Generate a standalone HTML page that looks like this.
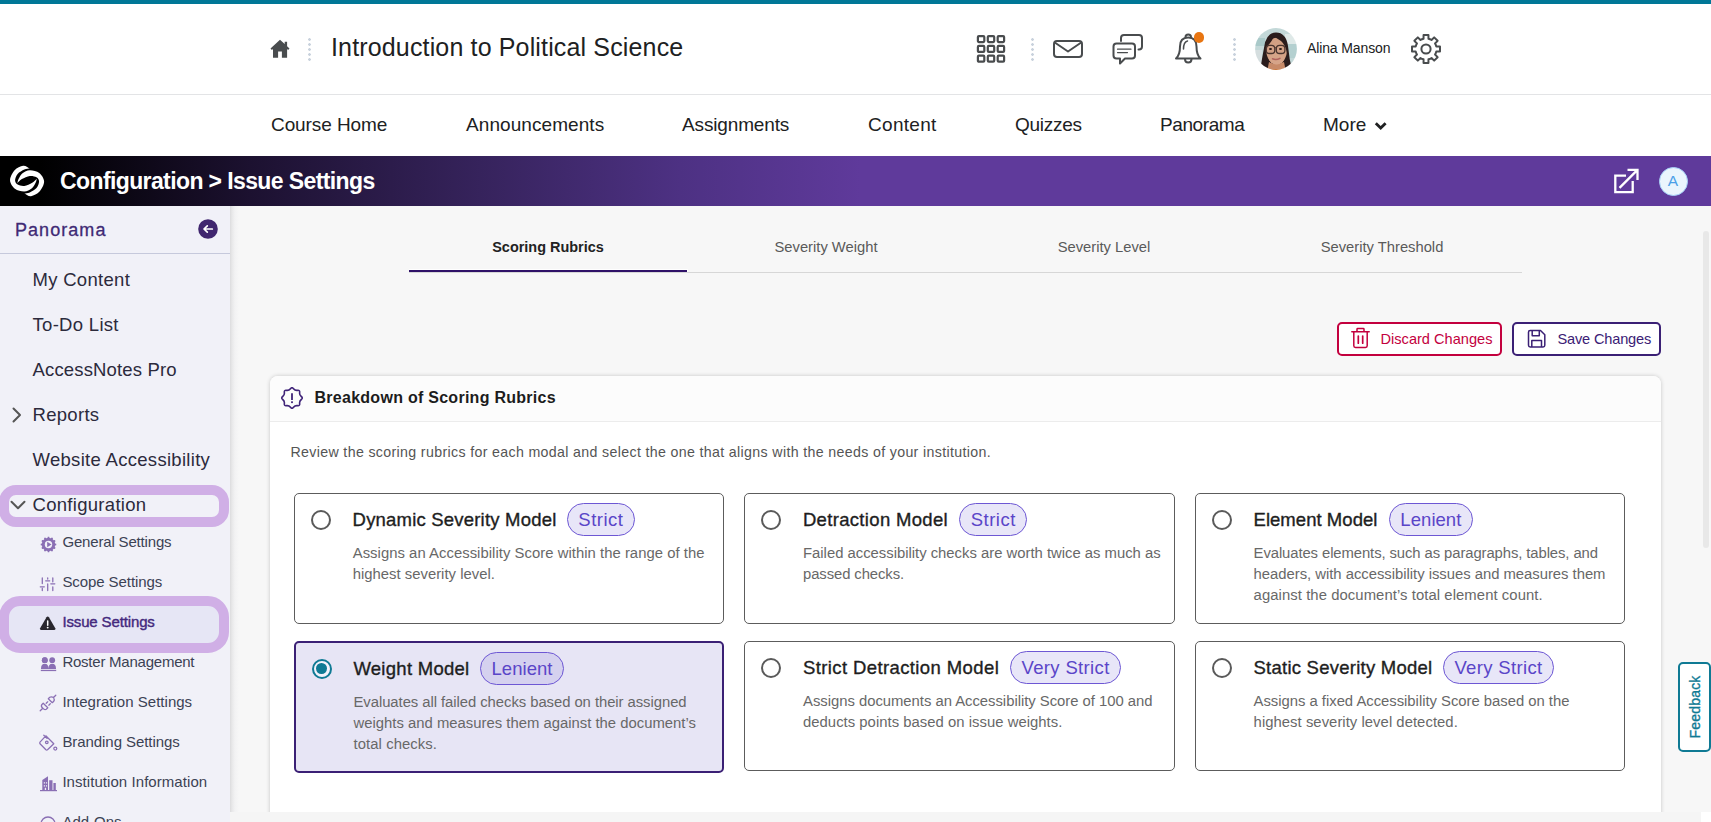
<!DOCTYPE html>
<html lang="en">
<head>
<meta charset="utf-8">
<title>Configuration - Issue Settings</title>
<style>
*{box-sizing:border-box;margin:0;padding:0}
html,body{width:1711px;height:822px;overflow:hidden;background:#fff;font-family:"Liberation Sans",sans-serif;color:#202122}
.abs{position:absolute}
.t{position:absolute;white-space:nowrap;line-height:1}
#topstripe{left:0;top:0;width:1711px;height:4px;background:#007797}
#hdr{left:0;top:4px;width:1711px;height:90px;background:#fff}
#hdrline{left:0;top:94px;width:1711px;height:1px;background:#e3e4e6}
#nav{left:0;top:95px;width:1711px;height:61px;background:#fff}
.navi{font-size:19px;color:#202122;top:115px}
.dots{width:3px;height:23px;background:radial-gradient(circle at 1.5px 1.5px,#c9d2dd 1.050px,rgba(201,210,221,0) 1.600px) 0 0/3px 5px repeat-y}
#pbar{left:0;top:156px;width:1711px;height:50px;background:linear-gradient(90deg,#000 0,#000 40px,#1c1130 250px,#36235c 480px,#4d3183 680px,#5f3a9b 860px,#5f3a9b 100%)}
#ptitle{left:60px;top:170.200px;font-size:23px;font-weight:bold;color:#fff;letter-spacing:-0.61px}
#side{left:0;top:206px;width:230px;height:616px;background:#f1f1f8;overflow:hidden}
#sideshadow{left:230px;top:206px;width:9px;height:606px;background:linear-gradient(90deg,#dcdcde,#e9e9ea 25%,#f2f2f3 55%,#f7f7f7)}
#main{left:230px;top:206px;width:1481px;height:616px;background:#f7f7f7;overflow:hidden}

.sh{left:15px;top:220.700px;font-size:18px;letter-spacing:1.050px;color:#3f2a75;-webkit-text-stroke:0.300px #3f2a75}
.si{left:32.500px;font-size:18.500px;color:#2c2a3c;letter-spacing:0.300px;margin-top:-0.500px}
.ss{left:62.400px;font-size:15px;color:#3c4254;margin-top:-0.800px}
.ring{border:10px solid #d0afe6;background:transparent}

.tab{top:240px;width:278px;text-align:center;font-size:14.750px;color:#5a5a5a}
.btn{top:322px;height:34px;border-radius:5px;background:#fff}
.opt{border:1px solid #5c5c5c;border-radius:5px;background:#fff;width:430px}
.radio{width:20px;height:20px;border-radius:50%;border:2px solid #5a5a5a;background:#fff}
.ot{font-size:18.500px;color:#1e1e1e;-webkit-text-stroke:0.350px #1e1e1e}
.badge{height:33px;border-radius:17px;border:1px solid #6d57d4;background:#e8e6f8;color:#5a45c8;font-size:18.500px;line-height:31px;text-align:center;white-space:nowrap}
.od{font-size:14.850px;line-height:21px;color:#686868;white-space:nowrap}
</style>
</head>
<body>
<div class="abs" id="topstripe"></div>
<div class="abs" id="hdr"></div>
<div class="abs" id="hdrline"></div>
<div class="abs" id="nav"></div>

<!-- header content -->
<svg class="abs" style="left:270px;top:39px" width="20" height="20" viewBox="270 39 20 20"><path d="M280 39.700 L270.500 48.500 L271.900 50 L273 49 V57.800 H278.100 V51.500 H281.900 V57.800 H287.100 V49 L288.100 50 L289.500 48.500 L287.100 46.300 V41.700 H284.700 V44.100 Z" fill="#494c4e"/></svg>
<div class="abs dots" style="left:308px;top:37.500px"></div>
<div class="t" id="ctitle" style="left:331px;top:34.800px;font-size:25px;letter-spacing:0.15px;color:#202122">Introduction to Political Science</div>


<!-- header right icons -->
<svg class="abs" style="left:976px;top:34px" width="30" height="30" viewBox="0 0 30 30" fill="none" stroke="#494c4e" stroke-width="2.200">
<rect x="1.9" y="2.1" width="6.4" height="6" rx="1"/><rect x="11.8" y="2.1" width="6.4" height="6" rx="1"/><rect x="21.7" y="2.1" width="6.4" height="6" rx="1"/>
<rect x="1.9" y="11.9" width="6.4" height="6" rx="1"/><rect x="11.8" y="11.9" width="6.4" height="6" rx="1"/><rect x="21.7" y="11.9" width="6.4" height="6" rx="1"/>
<rect x="1.9" y="21.7" width="6.4" height="6" rx="1"/><rect x="11.8" y="21.7" width="6.4" height="6" rx="1"/><rect x="21.7" y="21.7" width="6.4" height="6" rx="1"/>
</svg>
<div class="abs dots" style="left:1030.500px;top:37.500px"></div>
<svg class="abs" style="left:1052px;top:39px" width="32" height="20" viewBox="0 0 32 20" fill="none" stroke="#494c4e" stroke-width="2" stroke-linejoin="round" stroke-linecap="round">
<rect x="2" y="2" width="28" height="16" rx="3"/><path d="M3.5 4 L16 12.5 L28.5 4"/>
</svg>
<svg class="abs" style="left:1112px;top:33px" width="32" height="32" viewBox="0 0 32 32" fill="none" stroke="#494c4e" stroke-width="2" stroke-linejoin="round" stroke-linecap="round">
<path d="M9 8 V5 Q9 2 12 2 H27 Q30 2 30 5 V13.500 Q30 16.500 27 16.500 H26.500"/>
<path d="M4.500 10.500 H20 Q23 10.500 23 13.500 V22.500 Q23 25.500 20 25.500 H13 L8 30.500 V25.500 H4.500 Q1.500 25.500 1.500 22.500 V13.500 Q1.500 10.500 4.500 10.500 Z"/>
<path d="M5.500 16.200 H19 M5.500 19.600 H15.500" stroke-width="1.200"/>
</svg>
<svg class="abs" style="left:1172px;top:31px" width="34" height="34" viewBox="0 0 34 34" fill="none" stroke="#494c4e" stroke-width="2" stroke-linejoin="round" stroke-linecap="round">
<path d="M13.5 6.2 Q13.5 3.5 16.2 3.5 Q19 3.500 19 6.200"/>
<path d="M4 27.5 Q8 24 8 15.5 Q8 6.5 16.2 6.500 Q24.500 6.500 24.500 15.500 Q24.500 24 28.500 27.500 Z"/>
<path d="M13 28 Q13 31.5 16.2 31.5 Q19.500 31.500 19.500 28"/>
<path d="M11.5 18 Q11.5 11 15.5 10" stroke-width="1.5"/>
</svg>
<div class="abs" style="left:1193.500px;top:32px;width:10.500px;height:10.500px;border-radius:50%;background:#e87511"></div>
<div class="abs dots" style="left:1232.500px;top:37.500px"></div>
<!-- avatar -->
<svg class="abs" style="left:1255px;top:28px" width="42" height="42" viewBox="0 0 42 42">
<defs><clipPath id="avc"><circle cx="21" cy="21" r="20.9"/></clipPath>
<filter id="avb" x="-10%" y="-10%" width="120%" height="120%"><feGaussianBlur stdDeviation="0.55"/></filter></defs>
<g clip-path="url(#avc)"><g filter="url(#avb)">
<rect x="-2" y="-2" width="46" height="46" fill="#c3d8d8"/>
<rect x="-2" y="10" width="12" height="8" fill="#a9c9c9"/>
<rect x="30" y="6" width="14" height="10" fill="#dfe9e8"/>
<rect x="32" y="16" width="12" height="14" fill="#b4d0d0"/>
<rect x="-2" y="22" width="9" height="20" fill="#d5dedf"/>
<path d="M5 44 Q7 30 9 20 Q10.500 5 21 4.500 Q31 4.500 33 18 Q34 30 37.500 44 Z" fill="#2b1c1b"/>
<path d="M14 34 Q21 38 29 34 L31 44 H12 Z" fill="#c78a68"/>
<path d="M16 41 H27 L28 44 H15 Z" fill="#c8763e"/>
<ellipse cx="21.600" cy="23" rx="10.200" ry="13.200" fill="#d2a083"/>
<ellipse cx="21.600" cy="30" rx="8" ry="6.500" fill="#d6a488"/>
<path d="M10.500 22 Q10 9 19 8.500 Q17 13 13.500 17 Q12 19 11.500 24 Z" fill="#2b1c1b"/>
<path d="M19 8.500 Q29 7 32 18 Q32.500 22 32 25 Q30.500 17 26 13 Q22 10.500 19 8.500 Z" fill="#2b1c1b"/>
<rect x="11.200" y="17.300" width="8.600" height="8.200" rx="3.300" fill="#cfa088" fill-opacity="0.500" stroke="#4a342e" stroke-width="1.300"/>
<rect x="21.300" y="17.300" width="8.600" height="8.200" rx="3.300" fill="#cfa088" fill-opacity="0.500" stroke="#4a342e" stroke-width="1.300"/>
<path d="M19.800 20 Q20.550 19.300 21.300 20" stroke="#4a342e" stroke-width="1" fill="none"/>
<ellipse cx="15.500" cy="21" rx="1.500" ry="0.900" fill="#2a1b18"/>
<ellipse cx="25.500" cy="21" rx="1.500" ry="0.900" fill="#2a1b18"/>
<path d="M17.500 30.700 Q21 32.300 25 30.300" stroke="#b0625c" stroke-width="1.500" fill="none" stroke-linecap="round"/>
</g></g>
</svg>
<div class="t" id="uname" style="left:1307px;top:41px;font-size:14px;letter-spacing:-0.120px;color:#202122">Alina Manson</div>
<svg class="abs" style="left:1410px;top:33px" width="32" height="32" viewBox="0 0 32 32" fill="none" stroke="#494c4e" stroke-width="2" stroke-linejoin="round">
<path d="M13.53 5.69 L13.56 2.01 L18.44 2.01 L18.47 5.69 A10.60 10.60 0 0 1 21.54 6.96 L24.17 4.38 L27.62 7.83 L25.04 10.46 A10.60 10.60 0 0 1 26.31 13.53 L29.99 13.56 L29.99 18.44 L26.31 18.47 A10.60 10.60 0 0 1 25.04 21.54 L27.62 24.17 L24.17 27.62 L21.54 25.04 A10.60 10.60 0 0 1 18.47 26.31 L18.44 29.99 L13.56 29.99 L13.53 26.31 A10.60 10.60 0 0 1 10.46 25.04 L7.83 27.62 L4.38 24.17 L6.96 21.54 A10.60 10.60 0 0 1 5.69 18.47 L2.01 18.44 L2.01 13.56 L5.69 13.53 A10.60 10.60 0 0 1 6.96 10.46 L4.38 7.83 L7.83 4.38 L10.46 6.96 A10.60 10.60 0 0 1 13.53 5.69 Z"/>
<circle cx="16" cy="16" r="4.600"/>
</svg>

<!-- nav -->
<div class="t navi" style="left:271px;letter-spacing:-0.09px">Course Home</div>
<div class="t navi" style="left:466px;letter-spacing:0.07px">Announcements</div>
<div class="t navi" style="left:682px;letter-spacing:-0.14px">Assignments</div>
<div class="t navi" style="left:868px;letter-spacing:0.30px">Content</div>
<div class="t navi" style="left:1015px;letter-spacing:-0.27px">Quizzes</div>
<div class="t navi" style="left:1160px;letter-spacing:-0.40px">Panorama</div>
<div class="t navi" style="left:1323px">More</div>
<svg class="abs" style="left:1374px;top:120.500px" width="14" height="10" viewBox="0 0 14 10"><path d="M1.800 2.200 L6.700 7.100 L11.600 2.200" fill="none" stroke="#202122" stroke-width="2.800"/></svg>

<!-- purple bar -->
<div class="abs" id="pbar"></div>
<div class="t" id="ptitle">Configuration &gt; Issue Settings</div>

<!-- purple bar content -->
<svg class="abs" style="left:0;top:156px" width="54" height="50" viewBox="-27.07 -24.94 54 50"><path id="lg1" fill="#fff" d="M2.74 -12.47 C1.62 -12.93 -1.42 -15.51 -3.95 -15.21 C-6.49 -14.90 -10.29 -13.08 -12.47 -10.64 C-14.65 -8.21 -17.08 -3.70 -17.03 -0.61 C-16.98 2.48 -14.55 6.03 -12.17 7.91 C-9.78 9.78 -5.53 10.70 -2.74 10.64 C0.05 10.59 2.69 9.07 4.56 7.60 C6.44 6.13 7.65 3.48 8.52 1.82 C9.38 0.17 9.53 -1.62 9.73 -2.31 C8.97 -1.62 7.25 0.61 5.17 1.82 C3.09 3.04 -0.30 4.68 -2.74 4.99 C-5.17 5.29 -7.89 4.58 -9.43 3.65 C-10.97 2.72 -11.98 1.17 -11.98 -0.61 C-11.98 -2.38 -10.97 -5.19 -9.43 -7.00 C-7.89 -8.80 -4.76 -10.52 -2.74 -11.44 C-0.71 -12.35 1.82 -12.30 2.74 -12.47 Z"/><path fill="#fff" transform="rotate(180)" d="M2.74 -12.47 C1.62 -12.93 -1.42 -15.51 -3.95 -15.21 C-6.49 -14.90 -10.29 -13.08 -12.47 -10.64 C-14.65 -8.21 -17.08 -3.70 -17.03 -0.61 C-16.98 2.48 -14.55 6.03 -12.17 7.91 C-9.78 9.78 -5.53 10.70 -2.74 10.64 C0.05 10.59 2.69 9.07 4.56 7.60 C6.44 6.13 7.65 3.48 8.52 1.82 C9.38 0.17 9.53 -1.62 9.73 -2.31 C8.97 -1.62 7.25 0.61 5.17 1.82 C3.09 3.04 -0.30 4.68 -2.74 4.99 C-5.17 5.29 -7.89 4.58 -9.43 3.65 C-10.97 2.72 -11.98 1.17 -11.98 -0.61 C-11.98 -2.38 -10.97 -5.19 -9.43 -7.00 C-7.89 -8.80 -4.76 -10.52 -2.74 -11.44 C-0.71 -12.35 1.82 -12.30 2.74 -12.47 Z"/></svg>
<svg class="abs" style="left:1612px;top:167px" width="28" height="28" viewBox="0 0 28 28" fill="none" stroke="#fff" stroke-width="2.300">
<path d="M14 8.700 H3.300 V25.100 H20.700 V14"/><path d="M7.500 20.900 L25 3.400 M15.500 2.900 H25.500 V12.900" />
</svg>
<div class="abs" style="left:1658.500px;top:166.500px;width:29px;height:29px;border-radius:50%;background:#eaf5fd;border:1.500px solid #a5d2f8"></div>
<div class="t" style="left:1658.500px;top:172.500px;width:29px;text-align:center;font-size:15.500px;color:#4a9fe8">A</div>

<div class="abs" id="side"></div>
<!-- sidebar content -->
<div class="t sh" id="sh">Panorama</div>
<svg class="abs" style="left:197.500px;top:218.500px" width="20" height="20" viewBox="0 0 20 20"><circle cx="10" cy="10" r="9.800" fill="#40266f"/><path d="M14.300 10 H6.300 M9.300 6.800 L6 10 L9.300 13.200" fill="none" stroke="#fff" stroke-width="1.700" stroke-linecap="round" stroke-linejoin="round"/></svg>
<div class="abs" style="left:0;top:253px;width:230px;height:1px;background:#c6c9dc"></div>
<div class="t si" style="top:271px">My Content</div>
<div class="t si" style="top:316px">To-Do List</div>
<div class="t si" style="top:361px;letter-spacing:0.150px">AccessNotes Pro</div>
<svg class="abs" style="left:11px;top:406px" width="12" height="18" viewBox="0 0 12 18"><path d="M2.500 2.500 L9 9 L2.500 15.500" fill="none" stroke="#555" stroke-width="2" stroke-linecap="round" stroke-linejoin="round"/></svg>
<div class="t si" style="top:406px">Reports</div>
<div class="t si" style="top:451px">Website Accessibility</div>
<div class="abs ring" style="left:-1px;top:485px;width:230px;height:42px;border-radius:17px"></div>
<svg class="abs" style="left:9px;top:499px" width="18" height="12" viewBox="0 0 18 12"><path d="M2.500 2.800 L9 9.300 L15.500 2.800" fill="none" stroke="#555" stroke-width="2" stroke-linecap="round" stroke-linejoin="round"/></svg>
<div class="t si" style="top:496px">Configuration</div>
<div class="abs" style="left:8px;top:605px;width:212px;height:39px;border-radius:12px;background:#e6e6f5"></div>
<div class="abs ring" style="left:-1px;top:596px;width:230px;height:57px;border-radius:21px"></div>
<div class="t ss" style="top:535px;letter-spacing:-0.169px">General Settings</div>
<div class="t ss" style="top:575px;letter-spacing:-0.079px">Scope Settings</div>
<div class="t ss" id="iss" style="top:615px;color:#44297d;-webkit-text-stroke:0.400px #44297d;letter-spacing:-0.136px">Issue Settings</div>
<div class="t ss" style="top:655px;letter-spacing:-0.235px">Roster Management</div>
<div class="t ss" style="top:695px;letter-spacing:0.025px">Integration Settings</div>
<div class="t ss" style="top:735px;letter-spacing:-0.065px">Branding Settings</div>
<div class="t ss" style="top:775px;letter-spacing:0.061px">Institution Information</div>
<div class="t ss" style="top:815px">Add-Ons</div>
<!-- side icons -->
<svg class="abs" style="left:40px;top:536px" width="17" height="17" viewBox="0 0 17 17"><path d="M7.45 1.88 L7.81 0.73 L9.19 0.73 L9.55 1.88 L10.90 2.25 L11.78 1.43 L12.99 2.12 L12.72 3.29 L13.71 4.28 L14.88 4.01 L15.57 5.22 L14.75 6.10 L15.12 7.45 L16.27 7.81 L16.27 9.19 L15.12 9.55 L14.75 10.90 L15.57 11.78 L14.88 12.99 L13.71 12.72 L12.72 13.71 L12.99 14.88 L11.78 15.57 L10.90 14.75 L9.55 15.12 L9.19 16.27 L7.81 16.27 L7.45 15.12 L6.10 14.75 L5.22 15.57 L4.01 14.88 L4.28 13.71 L3.29 12.72 L2.12 12.99 L1.43 11.78 L2.25 10.90 L1.88 9.55 L0.73 9.19 L0.73 7.81 L1.88 7.45 L2.25 6.10 L1.43 5.22 L2.12 4.01 L3.29 4.28 L4.28 3.29 L4.01 2.12 L5.22 1.43 L6.10 2.25 Z" fill="#8a6fb4"/><circle cx="8.500" cy="8.500" r="3.700" fill="#f1f1f8"/><path d="M7.200 5.700 L11.500 8.500 L7.200 11.300 Z" fill="#8a6fb4"/></svg>
<svg class="abs" style="left:39px;top:576px" width="18" height="16" viewBox="0 0 18 16" stroke="#8a6fb4" stroke-width="1.300" fill="none" stroke-linecap="round"><path d="M3.300 2 V7.500 M3.300 12.500 V14.500 M1.300 10.800 H5.300 M8.700 2 V3 M8.700 8 V14.500 M6.700 4.800 H10.700 M13.800 2 V5.800 M13.800 10.800 V14.500 M11.800 7.800 H15.800"/></svg>
<svg class="abs" style="left:39px;top:615px" width="18" height="16" viewBox="0 0 18 16"><path d="M8.700 1.500 Q9.400 1.500 9.900 2.300 L16.300 13.300 Q16.900 14.800 15.300 15 H2.100 Q0.500 14.800 1.100 13.300 L7.500 2.300 Q8 1.500 8.700 1.500 Z" fill="#29272e"/><path d="M8.700 6 V10.300" stroke="#fff" stroke-width="1.500" stroke-linecap="round"/><circle cx="8.700" cy="12.600" r="0.950" fill="#fff"/></svg>
<svg class="abs" style="left:40px;top:656px" width="17" height="16" viewBox="0 0 17 16" fill="#8a6fb4"><circle cx="4.800" cy="4.200" r="2.900"/><circle cx="12.200" cy="4.200" r="2.900"/><path d="M1 12.500 Q1 7.800 4.800 7.800 Q8.500 7.800 8.500 12.500 Q8.500 7.800 12.200 7.800 Q16 7.800 16 12.500 V13 H1 Z"/><rect x="0.800" y="13.800" width="15.400" height="1.300"/><circle cx="4.800" cy="4.200" r="2.900"/></svg>
<svg class="abs" style="left:39px;top:694px" width="18" height="18" viewBox="0 0 18 18" stroke="#8a6fb4" stroke-width="1.250" fill="none" stroke-linecap="round" stroke-linejoin="round"><path d="M1.200 16.800 L3.800 14.200 M16.800 1.200 L14.500 3.500 M4.200 9.200 L8.800 13.800 L7.300 15.300 Q5.500 16.300 3.800 14.200 Q1.700 12.500 2.700 10.700 Z M9.300 4.700 L13.300 8.700 L14.800 7.200 Q15.800 5.500 14.500 3.500 Q12.500 2.200 10.800 3.200 Z M7.200 9.300 L8.700 7.800 M9.800 11.200 L11.300 9.700"/></svg>
<svg class="abs" style="left:38px;top:734px" width="20" height="18" viewBox="0 0 20 18" stroke="#8a6fb4" stroke-width="1.250" fill="none" stroke-linecap="round" stroke-linejoin="round"><path d="M7.800 1.800 L15.800 9.800 L9.500 15.800 Q8.700 16.400 7.900 15.800 L2 9.800 Q1.400 9 2 8.200 Z M5.800 1.200 L9 4.400"/><circle cx="8.800" cy="8.300" r="1.300"/><circle cx="17.300" cy="14.500" r="1.500"/></svg>
<svg class="abs" style="left:39px;top:775px" width="19" height="17" viewBox="0 0 19 17" fill="#8a6fb4"><path d="M3.300 5 L9 1.300 V15 H3.300 Z M10.200 5.200 H13.500 V15 H10.200 Z M14.400 8 H16.800 V15 H14.400 Z"/><rect x="1" y="15" width="17" height="1.200"/><path d="M4.800 7.200 H6 V8.600 H4.800 Z M6.900 7.200 H8.100 V8.600 H6.900 Z M4.800 10.200 H6 V11.600 H4.800 Z M6.900 10.200 H8.100 V11.600 H6.900 Z M5.800 12.800 H7.100 V15 H5.800 Z" fill="#f1f1f8"/></svg>
<svg class="abs" style="left:40px;top:816px" width="16" height="16" viewBox="0 0 16 16" stroke="#8a6fb4" stroke-width="1.300" fill="none"><circle cx="8" cy="8" r="7"/></svg>

<div class="abs" id="main"></div>
<!-- main content -->
<div class="t tab" id="tab1" style="left:409px;font-weight:bold;color:#222;font-size:14.450px">Scoring Rubrics</div>
<div class="t tab" style="left:687px">Severity Weight</div>
<div class="t tab" style="left:965px">Severity Level</div>
<div class="t tab" style="left:1243px">Severity Threshold</div>
<div class="abs" style="left:409px;top:272px;width:1113px;height:1px;background:#d7d7d7"></div>
<div class="abs" style="left:409px;top:269px;width:279px;height:3px;background:#fff"></div><div class="abs" style="left:409px;top:270px;width:278px;height:2px;background:#2f1268"></div>

<div class="abs btn" style="left:1337px;width:165px;border:2px solid #c3003e"></div>
<svg class="abs" style="left:1350px;top:327px" width="21" height="22" viewBox="0 0 21 22" fill="none" stroke="#c3003e" stroke-width="1.500" stroke-linejoin="round" stroke-linecap="round"><path d="M1.800 4.800 H19.200 M7 4.500 V2.300 Q7 1.600 7.700 1.600 H13.300 Q14 1.600 14 2.300 V4.500 M3.800 5 V18.700 Q3.800 20.400 5.500 20.400 H15.500 Q17.200 20.400 17.200 18.700 V5"/><path d="M8.300 9 V16.200 M12.700 9 V16.200" stroke-width="1.700"/></svg>
<div class="t" id="b1t" style="left:1380.500px;top:331.500px;font-size:14.600px;color:#c3003e">Discard Changes</div>
<div class="abs btn" style="left:1512px;width:149px;border:2px solid #3b2075"></div>
<svg class="abs" style="left:1526px;top:328px" width="21" height="21" viewBox="0 0 21 21" fill="none" stroke="#3b2075" stroke-width="1.500" stroke-linejoin="round"><path d="M2.500 4.200 Q2.500 2.500 4.200 2.500 H14.500 L18.800 6.800 V17.300 Q18.800 19 17.100 19 H4.200 Q2.500 19 2.500 17.300 Z"/><path d="M6.200 2.800 V7.800 H13.300 V2.800 M5.800 19 V12.500 H15.500 V19"/></svg>
<div class="t" id="b2t" style="left:1557.500px;top:331.500px;font-size:14.600px;letter-spacing:-0.180px;color:#3b2075">Save Changes</div>

<!-- card -->
<div class="abs" style="left:270px;top:376px;width:1391px;height:460px;border-radius:8px;background:#fff;box-shadow:0 0 4px rgba(0,0,0,0.200)"></div>
<div class="abs" style="left:270px;top:376px;width:1391px;height:45.500px;border-radius:8px 8px 0 0;background:#fcfcfc;border-bottom:1px solid #ececec"></div>
<svg class="abs" style="left:281px;top:387px" width="22" height="22" viewBox="0 0 22 22" fill="none" stroke="#3f2378" stroke-width="1.600" stroke-linejoin="round"><path d="M9.49 1.70 Q11.00 -0.30 12.51 1.70 Q14.02 3.70 16.51 3.36 Q18.99 3.01 18.64 5.49 Q18.30 7.98 20.30 9.49 Q22.30 11.00 20.30 12.51 Q18.30 14.02 18.64 16.51 Q18.99 18.99 16.51 18.64 Q14.02 18.30 12.51 20.30 Q11.00 22.30 9.49 20.30 Q7.98 18.30 5.49 18.64 Q3.01 18.99 3.36 16.51 Q3.70 14.02 1.70 12.51 Q-0.30 11.00 1.70 9.49 Q3.70 7.98 3.36 5.49 Q3.01 3.01 5.49 3.36 Q7.98 3.70 9.49 1.70 Z"/><path d="M11 6.300 V13" stroke-width="1.800"/><rect x="10.100" y="14.300" width="1.800" height="1.800" fill="#3f2378" stroke="none"/></svg>
<div class="t" id="cardt" style="left:314.500px;top:389.500px;font-size:16px;letter-spacing:0.270px;font-weight:bold;color:#1c1c1c">Breakdown of Scoring Rubrics</div>
<div class="t" id="para" style="left:290.500px;top:444.500px;font-size:14.200px;letter-spacing:0.345px;color:#555">Review the scoring rubrics for each modal and select the one that aligns with the needs of your institution.</div>
<!-- options -->
<div class="abs opt" style="left:294px;top:493px;height:131px"></div>
<div class="abs radio" style="left:310.7px;top:510.0px"></div>
<div class="t ot" id="ot0" style="left:352.6px;top:510.5px;letter-spacing:0.200px">Dynamic Severity Model</div>
<div class="abs badge" id="bd0" style="left:566.7px;top:503.2px;width:68px;letter-spacing:0.5px;text-indent:0.5px">Strict</div>
<div class="abs od od0" style="left:352.7px;top:543.0px;letter-spacing:0.038px">Assigns an Accessibility Score within the range of the</div>
<div class="abs od od0" style="left:352.7px;top:564.0px;letter-spacing:0.011px">highest severity level.</div>
<div class="abs opt" style="left:744px;top:493px;height:131px;width:431px"></div>
<div class="abs radio" style="left:761.0px;top:510.0px"></div>
<div class="t ot" id="ot1" style="left:802.9px;top:510.5px;letter-spacing:0.332px">Detraction Model</div>
<div class="abs badge" id="bd1" style="left:959px;top:503.2px;width:68px;letter-spacing:0.5px;text-indent:0.5px">Strict</div>
<div class="abs od od1" style="left:803.0px;top:543.0px;letter-spacing:-0.008px">Failed accessibility checks are worth twice as much as</div>
<div class="abs od od1" style="left:803.0px;top:564.0px;letter-spacing:-0.094px">passed checks.</div>
<div class="abs opt" style="left:1195px;top:493px;height:131px"></div>
<div class="abs radio" style="left:1211.6000000000001px;top:510.0px"></div>
<div class="t ot" id="ot2" style="left:1253.5px;top:510.5px;letter-spacing:0.043px">Element Model</div>
<div class="abs badge" id="bd2" style="left:1388.9px;top:503.2px;width:84px;letter-spacing:0.05px">Lenient</div>
<div class="abs od od2" style="left:1253.6000000000001px;top:543.0px;letter-spacing:-0.093px">Evaluates elements, such as paragraphs, tables, and</div>
<div class="abs od od2" style="left:1253.6000000000001px;top:564.0px;letter-spacing:-0.024px">headers, with accessibility issues and measures them</div>
<div class="abs od od2" style="left:1253.6000000000001px;top:585.0px;letter-spacing:0.071px">against the document’s total element count.</div>
<div class="abs opt" style="left:294px;top:641px;height:132px;border:2px solid #3b2075;background:#e7e5f5"></div>
<div class="abs radio" style="left:311.8px;top:658.7px;border-color:#0f7a94;background:#f3f2fb"></div><div class="abs" style="left:316.4px;top:663.3000000000001px;width:10.800px;height:10.800px;border-radius:50%;background:#0f7a94"></div>
<div class="t ot" id="ot3" style="left:353.4px;top:660px;letter-spacing:0.279px">Weight Model</div>
<div class="abs badge" id="bd3" style="left:480px;top:651.9px;width:84px;background:#d5d1ef;letter-spacing:0.05px">Lenient</div>
<div class="abs od od3" style="left:353.5px;top:691.5px;letter-spacing:-0.055px">Evaluates all failed checks based on their assigned</div>
<div class="abs od od3" style="left:353.5px;top:712.5px;letter-spacing:0.005px">weights and measures them against the document’s</div>
<div class="abs od od3" style="left:353.5px;top:733.5px;letter-spacing:0.081px">total checks.</div>
<div class="abs opt" style="left:744px;top:641px;height:130px;width:431px"></div>
<div class="abs radio" style="left:761.0px;top:657.6px"></div>
<div class="t ot" id="ot4" style="left:802.9px;top:658.8px;letter-spacing:0.397px">Strict Detraction Model</div>
<div class="abs badge" id="bd4" style="left:1010.1px;top:651.2px;width:110.6px;letter-spacing:0.35px;text-indent:0.35px">Very Strict</div>
<div class="abs od od4" style="left:803.0px;top:690.7px;letter-spacing:-0.023px">Assigns documents an Accessibility Score of 100 and</div>
<div class="abs od od4" style="left:803.0px;top:711.7px;letter-spacing:0.027px">deducts points based on issue weights.</div>
<div class="abs opt" style="left:1195px;top:641px;height:130px"></div>
<div class="abs radio" style="left:1211.6000000000001px;top:657.6px"></div>
<div class="t ot" id="ot5" style="left:1253.5px;top:658.8px;letter-spacing:0.243px">Static Severity Model</div>
<div class="abs badge" id="bd5" style="left:1443px;top:651.2px;width:110.6px;letter-spacing:0.35px;text-indent:0.35px">Very Strict</div>
<div class="abs od od5" style="left:1253.6000000000001px;top:690.7px;letter-spacing:-0.022px">Assigns a fixed Accessibility Score based on the</div>
<div class="abs od od5" style="left:1253.6000000000001px;top:711.7px;letter-spacing:0.038px">highest severity level detected.</div>
<!-- scrollbar, feedback, bottom strip -->
<div class="abs" style="left:1703px;top:230.500px;width:6px;height:317px;border-radius:3px;background:#e8e8e8"></div>
<div class="abs" style="left:230px;top:812px;width:1481px;height:10px;background:#f5f5f5"></div>
<div class="abs" style="left:1701px;top:812px;width:10px;height:10px;background:#fff"></div>
<div class="abs" style="left:1677.500px;top:662px;width:33.500px;height:90px;border:2px solid #0f7a94;border-radius:5px;background:#fff"></div>
<div class="t" id="fb" style="left:1694.500px;top:706.500px;font-size:14px;color:#0f7a94;-webkit-text-stroke:0.350px #0f7a94;transform:translate(-50%,-50%) rotate(-90deg);letter-spacing:0.200px">Feedback</div>
<div class="abs" id="sideshadow"></div>
</body>
</html>
